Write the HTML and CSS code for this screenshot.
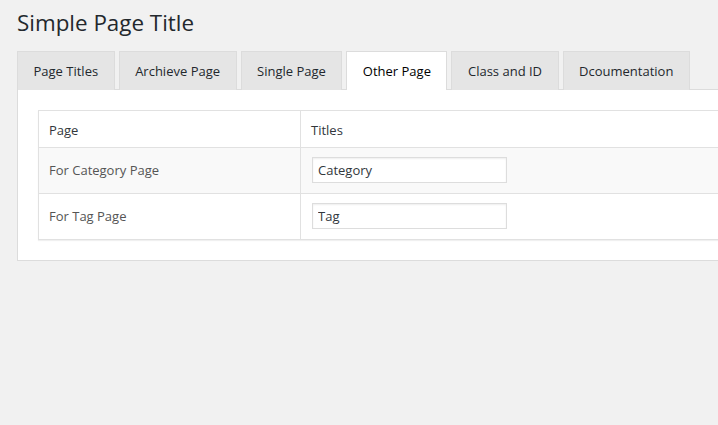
FILE: index.html
```html
<!DOCTYPE html>
<html>
<head>
<meta charset="utf-8">
<link rel="stylesheet" href="styles.css">
</head>
<body>
<div class="wrap">
  <h1 class="title">Simple Page Title</h1>
  <nav class="tabs">
    <a class="tab">Page Titles</a>
    <a class="tab">Archieve Page</a>
    <a class="tab">Single Page</a>
    <a class="tab active">Other Page</a>
    <a class="tab">Class and ID</a>
    <a class="tab">Dcoumentation</a>
  </nav>
  <div class="panel">
    <table class="grid">
      <thead>
        <tr><th class="c1">Page</th><th>Titles</th></tr>
      </thead>
      <tbody>
        <tr class="alt"><td class="c1">For Category Page</td><td><input class="field" type="text" value="Category"></td></tr>
        <tr><td class="c1">For Tag Page</td><td><input class="field" type="text" value="Tag"></td></tr>
      </tbody>
    </table>
  </div>
</div>
</body>
</html>
```
FILE: styles.css
```css
html, body {
  margin: 0;
  padding: 0;
  background: #f1f1f1;
  overflow: hidden;
  font-family: "Open Sans", "Noto Sans", sans-serif;
  color: #23282d;
}
.wrap {
  padding: 0 0 0 17px;
  width: 900px;
}
.title {
  font-size: 22.4px;
  font-weight: 400;
  line-height: 30px;
  margin: 8px 0 0;
  padding: 0;
  color: #23282d;
}
.tabs {
  display: flex;
  gap: 4px;
  margin-top: 13px;
  height: 38px;
}
.tab {
  box-sizing: border-box;
  height: 39px;
  padding: 0 15.5px;
  display: flex;
  align-items: center;
  font-size: 13px;
  color: #23282d;
  background: #e5e5e5;
  border: 1px solid #dcdcdc;
  border-bottom: none;
}
.tab.active {
  background: #fff;
  color: #000;
  position: relative;
  z-index: 1;
}
.panel {
  background: #fff;
  border: 1px solid #dcdcdc;
  padding: 20px 0 20px 20px;
}
.grid {
  width: 100%;
  border-collapse: collapse;
  border: 1px solid #e1e1e1;
  box-shadow: 0 1px 1px rgba(0,0,0,.06);
  font-size: 13px;
}
.grid th, .grid td {
  text-align: left;
  font-weight: 400;
  border-top: 1px solid #e1e1e1;
}
.grid th {
  line-height: 16px;
  padding: 11px 10px 9px;
  color: #32373c;
}
.grid td {
  line-height: 16px;
  padding: 9px 10px 10px;
  color: #555;
}
.grid .c1 {
  width: 241px;
  border-right: 1px solid #e1e1e1;
}
.alt td {
  background: #f9f9f9;
}
.field {
  box-sizing: border-box;
  width: 195px;
  height: 26px;
  margin: 0 0 0 1px;
  padding: 0 5px;
  border: 1px solid #ddd;
  box-shadow: inset 0 1px 2px rgba(0,0,0,.07);
  background: #fff;
  font-family: inherit;
  font-size: 13px;
  color: #32373c;
  display: block;
}
```
